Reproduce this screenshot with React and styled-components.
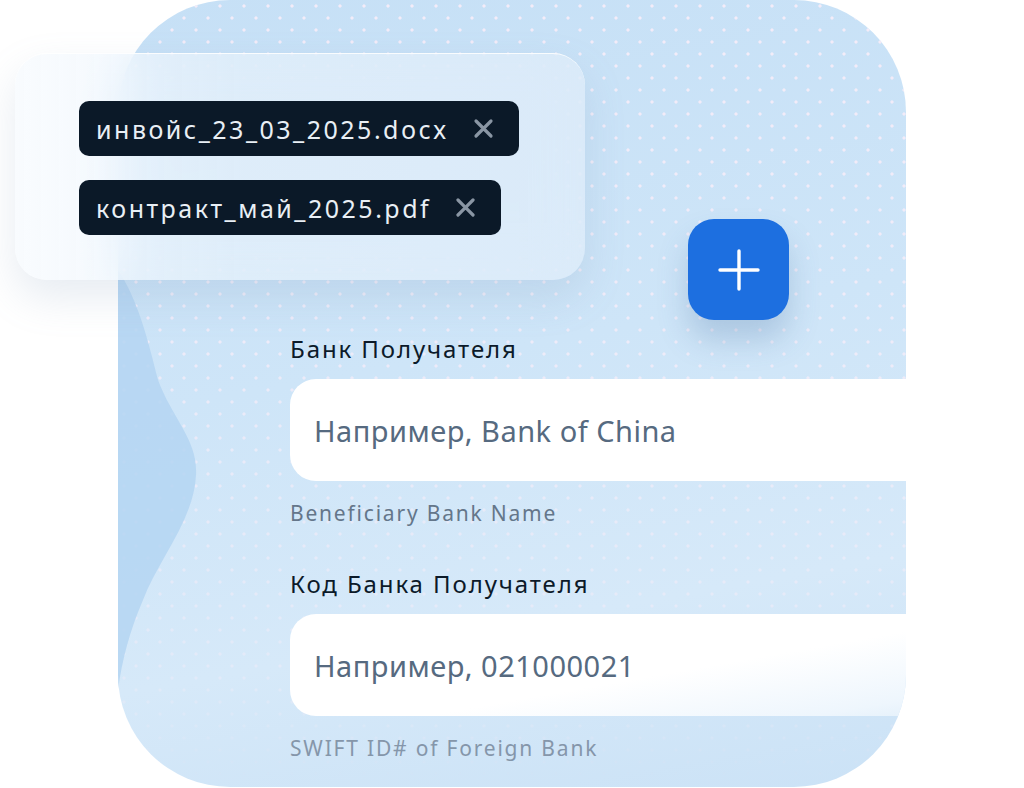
import React from "react";
import styled, { createGlobalStyle } from "styled-components";

const GlobalStyle = createGlobalStyle`
  html, body {
    margin: 0;
    padding: 0;
    background: #ffffff;
  }
  body {
    font-family: "Noto Sans", "Open Sans", sans-serif;
    overflow: hidden;
  }
`;

const Stage = styled.div`
  position: relative;
  width: 1024px;
  height: 788px;
  overflow: hidden;
  background: #ffffff;
`;

const Card = styled.div`
  position: relative;
  margin-left: 118px;
  width: 788px;
  height: 787px;
  border-radius: 112px;
  overflow: hidden;
  background: linear-gradient(170deg, #c6e0f6 0%, #cee5f8 45%, #d6e9f9 75%, #cbe2f6 100%);
`;

const Dots = styled.div`
  position: absolute;
  inset: 0;
  background-image: radial-gradient(circle, rgba(255, 238, 248, 0.8) 1.3px, transparent 1.9px),
    radial-gradient(circle, rgba(255, 238, 248, 0.8) 1.3px, transparent 1.9px);
  background-size: 24px 24px;
  background-position: 6px 6px, 18px 18px;
  mask-image: linear-gradient(180deg, #000 0%, rgba(0, 0, 0, 0.85) 40%, rgba(0, 0, 0, 0.4) 85%, transparent 100%);
  pointer-events: none;
`;

const Wave = styled.svg`
  position: absolute;
  left: 0;
  top: 0;
  pointer-events: none;
`;

const Form = styled.div`
  position: relative;
  display: flex;
  flex-direction: column;
  padding: 334px 0 0 172px;
`;

const Field = styled.div`
  display: flex;
  flex-direction: column;
  margin-bottom: ${(p) => p.$gap || 0}px;
`;

const Label = styled.div`
  font-size: 24px;
  line-height: 30px;
  color: #0c1a29;
  letter-spacing: 1.9px;
  margin-bottom: 15px;
`;

const Input = styled.div`
  width: 720px;
  height: 102px;
  border-radius: 26px 0 0 26px;
  background: ${(p) =>
    p.$fade
      ? "linear-gradient(170deg, #ffffff 55%, #eef6fd 85%, #dcecf9 100%)"
      : "#ffffff"};
  display: flex;
  align-items: center;
  padding-left: 24px;
  box-sizing: border-box;
  font-size: 29px;
  color: #566a80;
  letter-spacing: 0.5px;
`;

const Helper = styled.div`
  margin-top: 18px;
  font-size: 21px;
  line-height: 28px;
  letter-spacing: 1.8px;
  color: ${(p) => (p.$faded ? "#8596aa" : "#64768a")};
`;

const Panel = styled.div`
  position: absolute;
  left: 15px;
  top: 53px;
  width: 570px;
  height: 227px;
  box-sizing: border-box;
  border-radius: 32px;
  background: linear-gradient(90deg, rgba(246, 250, 254, 0.7) 0%, rgba(232, 242, 251, 0.65) 40%, rgba(226, 238, 250, 0.65) 100%);
  backdrop-filter: blur(24px);
  border-top: 1px solid rgba(255, 255, 255, 0.85);
  box-shadow: 0 18px 40px rgba(120, 150, 185, 0.18);
  display: flex;
  flex-direction: column;
  align-items: flex-start;
  gap: 24px;
  padding: 47px 0 0 64px;
`;

const Chip = styled.div`
  display: flex;
  align-items: center;
  height: 55px;
  box-sizing: border-box;
  padding: 0 25px 0 17px;
  border-radius: 10px;
  background: #0b1928;
  color: #e9eff5;
  font-size: 25px;
  letter-spacing: 2.5px;
  gap: 24px;
`;

const CloseIcon = styled.svg`
  display: block;
  width: 21px;
  height: 21px;
`;

const AddButton = styled.div`
  position: absolute;
  left: 688px;
  top: 219px;
  width: 101px;
  height: 101px;
  border-radius: 26px;
  background: #1d6fe0;
  box-shadow: 0 20px 30px rgba(70, 110, 160, 0.25);
  display: flex;
  align-items: center;
  justify-content: center;
`;

const files = ["инвойс_23_03_2025.docx", "контракт_май_2025.pdf"];

const App = () => {
  return (
    <Stage>
      <GlobalStyle />
      <Card>
        <Dots />
        <Wave width="120" height="787" viewBox="0 0 120 787">
          <path
            d="M0 270 C 20 300, 30 340, 40 380 C 55 420, 80 440, 78 475 C 76 520, 40 560, 25 600 C 12 630, 4 660, 0 690 Z"
            fill="#b4d5f2"
            opacity="0.85"
          />
        </Wave>
        <Form>
          <Field $gap={42}>
            <Label>Банк Получателя</Label>
            <Input>Например, Bank of China</Input>
            <Helper>Beneficiary Bank Name</Helper>
          </Field>
          <Field>
            <Label>Код Банка Получателя</Label>
            <Input $fade>Например, 021000021</Input>
            <Helper $faded>SWIFT ID# of Foreign Bank</Helper>
          </Field>
        </Form>
      </Card>
      <Panel>
        {files.map((name) => (
          <Chip key={name}>
            {name}
            <CloseIcon viewBox="0 0 21 21">
              <path
                d="M3 3 L18 18 M18 3 L3 18"
                stroke="#8a96a4"
                strokeWidth="3.2"
                strokeLinecap="round"
              />
            </CloseIcon>
          </Chip>
        ))}
      </Panel>
      <AddButton>
        <svg width="42" height="42" viewBox="0 0 42 42">
          <path
            d="M21 2 V40 M2 21 H40"
            stroke="#ffffff"
            strokeWidth="3.4"
            strokeLinecap="round"
          />
        </svg>
      </AddButton>
    </Stage>
  );
};

export default App;
